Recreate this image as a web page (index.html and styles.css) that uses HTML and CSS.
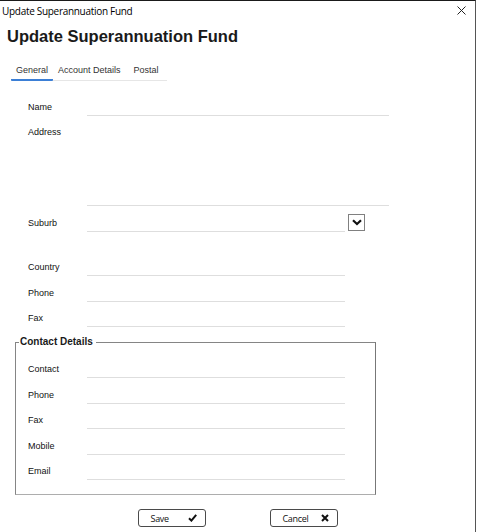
FILE: index.html
```html
<!DOCTYPE html>
<html lang="en">
<head>
    <meta charset="UTF-8">
    <meta name="viewport" content="width=device-width, initial-scale=1.0">
    <title>Update Superannuation Fund</title>
    <link rel="stylesheet" href="styles.css">
</head>
<body>
    <div class="window">
        <div class="titlebar">
            <span class="title">Update Superannuation Fund</span>
            <button class="close" title="Close">
                <svg width="9" height="9" viewBox="0 0 9 9"><path d="M0.5 0.5 L8.5 8.5 M8.5 0.5 L0.5 8.5" stroke="#222" stroke-width="1" fill="none"/></svg>
            </button>
        </div>

        <h1 class="heading">Update Superannuation Fund</h1>

        <nav class="tabs">
            <a class="tab active">General</a>
            <a class="tab">Account Details</a>
            <a class="tab last">Postal</a>
        </nav>

        <div class="form">
            <div class="row">
                <label>Name</label>
                <input type="text" class="field wide">
            </div>
            <div class="row address">
                <label>Address</label>
                <textarea class="field wide area"></textarea>
            </div>
            <div class="row">
                <label>Suburb</label>
                <input type="text" class="field">
                <button class="drop">
                    <svg width="10" height="7" viewBox="0 0 10 7"><path d="M1 1.2 L5 5 L9 1.2" stroke="#111" stroke-width="2.2" fill="none"/></svg>
                </button>
            </div>
            <div class="row country">
                <label>Country</label>
                <input type="text" class="field">
            </div>
            <div class="row">
                <label>Phone</label>
                <input type="text" class="field">
            </div>
            <div class="row">
                <label>Fax</label>
                <input type="text" class="field">
            </div>
        </div>

        <fieldset class="contact">
            <legend>Contact Details</legend>
            <div class="contact-rows">
                <div class="row">
                    <label>Contact</label>
                    <input type="text" class="field">
                </div>
                <div class="row">
                    <label>Phone</label>
                    <input type="text" class="field">
                </div>
                <div class="row">
                    <label>Fax</label>
                    <input type="text" class="field">
                </div>
                <div class="row">
                    <label>Mobile</label>
                    <input type="text" class="field">
                </div>
                <div class="row">
                    <label>Email</label>
                    <input type="text" class="field">
                </div>
            </div>
        </fieldset>

        <div class="actions">
            <button class="btn">
                <span>Save</span>
                <svg width="9" height="8" viewBox="0 0 9 8"><path d="M1 4.2 L3.4 6.6 L8.2 0.8" stroke="#111" stroke-width="2" fill="none"/></svg>
            </button>
            <button class="btn">
                <span>Cancel</span>
                <svg width="8" height="8" viewBox="0 0 8 8"><path d="M1 1 L7 7 M7 1 L1 7" stroke="#111" stroke-width="2" fill="none"/></svg>
            </button>
        </div>
    </div>
</body>
</html>
```

FILE: styles.css
```css
body {
    margin: 0;
    background: #fff;
    font-family: 'Liberation Sans', Arial, sans-serif;
    color: #111;
}
.window {
    width: 476px;
    height: 532px;
    box-sizing: border-box;
    border-top: 1px solid #1a1a1a;
    border-right: 1px solid #555;
}
.titlebar {
    height: 19px;
    display: flex;
    align-items: center;
    justify-content: space-between;
    padding: 0 9px 0 2px;
}
.title {
    font-family: 'Open Sans', sans-serif;
    font-size: 10px;
    letter-spacing: -0.3px;
    color: #000;
}
.close {
    border: none;
    background: none;
    padding: 0;
    width: 9px;
    height: 9px;
    display: flex;
}
.heading {
    font-size: 16.5px;
    line-height: 20px;
    font-weight: bold;
    margin: 6px 0 0 7px;
    color: #1a1a1a;
}
.tabs {
    display: inline-flex;
    margin: 15px 0 0 11px;
    padding-right: 3px;
    border-bottom: 1px solid #e6e6e6;
}
.tab {
    font-size: 9px;
    line-height: 11px;
    padding: 4px 5px 3px;
    color: #333;
    border-bottom: 2px solid transparent;
    margin-bottom: -1px;
}
.tab.last {
    padding-left: 8px;
}
.tab.active {
    border-bottom-color: #3b7fd6;
    border-radius: 1px;
}
.form {
    padding: 19px 0 0 28px;
}
.row {
    display: flex;
    align-items: flex-start;
    margin-top: 9.5px;
}
.form .row:first-child,
.contact-rows .row:first-child {
    margin-top: 0;
}
.row label {
    width: 59px;
    flex-shrink: 0;
    font-size: 9px;
    line-height: 14px;
    color: #111;
}
.field {
    width: 258px;
    height: 16px;
    box-sizing: border-box;
    border: none;
    border-bottom: 1px solid #dedede;
    padding: 0;
    margin: 0;
    font-family: inherit;
    font-size: 9px;
    outline: none;
    background: transparent;
}
.field.wide {
    width: 302px;
}
.field.area {
    height: 81px;
    resize: none;
}
.row.address {
    margin-top: 9px;
}
.row.country {
    margin-top: 28.5px;
}
.drop {
    width: 17px;
    height: 17px;
    margin: -2px 0 0 3px;
    padding: 0;
    box-sizing: border-box;
    border: 1px solid #808080;
    background: #fff;
    display: flex;
    align-items: center;
    justify-content: center;
}
.contact {
    margin: 9px 0 0 15px;
    width: 361px;
    box-sizing: border-box;
    padding: 0;
    border: 1px solid #858585;
    border-right-color: #777;
    border-bottom-color: #adadad;
}
.contact legend {
    font-size: 10px;
    line-height: 12px;
    font-weight: bold;
    margin-left: 3px;
    padding: 0 3px 0 1px;
    color: #1a1a1a;
}
.contact-rows {
    padding: 14px 0 14px 12px;
}
.actions {
    display: flex;
    justify-content: center;
    gap: 64px;
    margin-top: 14px;
}
.btn {
    width: 68px;
    height: 18px;
    box-sizing: border-box;
    border: 1px solid #4a4a4a;
    border-radius: 3px;
    background: #fff;
    display: flex;
    align-items: center;
    justify-content: space-between;
    padding: 0 8px 0 12px;
    font-family: 'Open Sans', sans-serif;
    font-size: 9px;
    letter-spacing: -0.3px;
    color: #111;
}
```
